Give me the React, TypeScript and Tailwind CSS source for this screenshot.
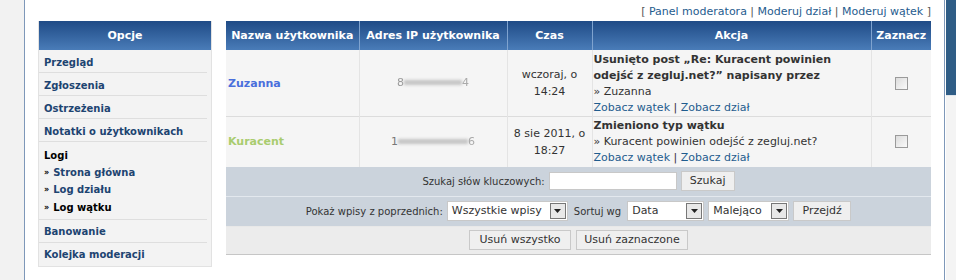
import React from "react";

const font = { fontFamily: '"DejaVu Sans", Verdana, sans-serif' };

function Select({ label, w }: { label: string; w: string }) {
  return (
    <div className={`flex items-center h-[20px] bg-white border border-[#c8c8c8] ${w}`}>
      <span className="flex-1 pl-[4px] text-[11px] text-[#333] whitespace-nowrap">{label}</span>
      <span className="w-[16px] h-[16px] mr-[1px] flex items-center justify-center bg-[#e8e8e8] border border-[#777]">
        <svg width="7" height="4" viewBox="0 0 7 4"><path d="M0 0h7L3.5 4z" fill="#222" /></svg>
      </span>
    </div>
  );
}

function Btn({ children, w }: { children: React.ReactNode; w?: string }) {
  return (
    <div className={`h-[20px] flex items-center justify-center bg-[#efefef] border border-[#c9c9c9] text-[11px] text-[#333] whitespace-nowrap ${w ?? ""}`}>
      {children}
    </div>
  );
}

function Check() {
  return <div className="w-[13px] h-[13px] border border-[#9a9a9a] bg-gradient-to-br from-[#dcdcdc] to-[#fafafa] mx-auto" />;
}

export default function App() {
  const side = "block px-[5px] text-[10px] font-bold text-[#1d4471]";
  const sub = "h-[17px] flex items-center px-[5px] text-[10px] font-bold";
  return (
    <div className="flex w-[956px] h-[280px] bg-white overflow-hidden" style={font}>
      <div className="w-[25px] bg-[#f2f2f2] border-r border-[#7e98b9]" />
      <div className="w-[919px] pl-[13px] pr-[13px]">
        <div className="h-[21px] pt-[3px] flex items-center justify-end text-[11px] text-[#555] whitespace-nowrap">
          [&nbsp;<span className="text-[#1f5c8e]">Panel moderatora</span>&nbsp;|&nbsp;<span className="text-[#1f5c8e]">Moderuj dział</span>&nbsp;|&nbsp;<span className="text-[#1f5c8e]">Moderuj wątek</span>&nbsp;]
        </div>
        <div className="flex items-start gap-[14px]">
          {/* sidebar */}
          <div className="w-[174px] bg-[#f3f3f3] border border-[#e2e2e2] border-t-0">
            <div className="h-[29px] pt-[2px] flex items-center justify-center bg-gradient-to-b from-[#1f4b86] to-[#4a7cb8] text-white font-bold text-[11px]">
              Opcje
            </div>
            <div className="pr-[4px]">
              <div className="h-[23px] pt-[2px] flex items-center border-b border-[#dedede]"><span className={side}>Przegląd</span></div>
              <div className="h-[23px] pt-[2px] flex items-center border-b border-[#dedede]"><span className={side}>Zgłoszenia</span></div>
              <div className="h-[23px] pt-[2px] flex items-center border-b border-[#dedede]"><span className={side}>Ostrzeżenia</span></div>
              <div className="h-[23px] pt-[2px] flex items-center border-b border-[#dedede]"><span className={side}>Notatki o użytkownikach</span></div>
              <div className="pt-[5px] pb-[2px] border-b border-[#dedede]">
                <div className={`${sub} h-[16px] text-black`}>Logi</div>
                <div className={`${sub} text-[#1d4471]`}><span className="text-[8px] mr-[4px] text-black">»</span>Strona główna</div>
                <div className={`${sub} text-[#1d4471]`}><span className="text-[8px] mr-[4px] text-black">»</span>Log działu</div>
                <div className={`${sub} h-[19px] text-black`}><span className="text-[8px] mr-[4px]">»</span>Log wątku</div>
              </div>
              <div className="h-[23px] flex items-center border-b border-[#dedede]"><span className={side}>Banowanie</span></div>
              <div className="h-[23px] flex items-center"><span className={side}>Kolejka moderacji</span></div>
            </div>
          </div>
          {/* table */}
          <div className="w-[705px] border-b border-[#c6c6c6]">
            <table className="w-full table-fixed border-collapse text-[11px] text-[#333]">
              <thead>
                <tr className="h-[29px] bg-gradient-to-b from-[#1f4b86] to-[#4a7cb8] text-white font-bold text-[11px] whitespace-nowrap">
                  <th className="w-[133px] pt-[2px] border-r border-[#7fa3cf] font-bold">Nazwa użytkownika</th>
                  <th className="w-[148px] pt-[2px] border-r border-[#7fa3cf] font-bold">Adres IP użytkownika</th>
                  <th className="w-[85px] pt-[2px] border-r border-[#7fa3cf] font-bold">Czas</th>
                  <th className="w-[279px] pt-[2px] border-r border-[#7fa3cf] font-bold">Akcja</th>
                  <th className="pt-[2px] font-bold">Zaznacz</th>
                </tr>
              </thead>
              <tbody>
                <tr className="h-[65px] bg-[#f5f5f5] border-b border-[#dcdcdc]">
                  <td className="pl-[2px] pt-[2px] border-r border-[#e4e4e4] font-bold text-[#4a6fdc]">Zuzanna</td>
                  <td className="border-r border-[#e4e4e4] text-center">
                    <span className="text-[#999] blur-[0.4px]">8</span><span className="inline-block align-middle w-[58px] h-[5px] bg-[#c4c4c4] blur-[1.5px]" /><span className="text-[#aaa] blur-[0.6px]">4</span>
                  </td>
                  <td className="border-r border-[#e4e4e4] text-center leading-[17px]">wczoraj, o<br />14:24</td>
                  <td className="border-r border-[#e4e4e4] px-[1px] leading-[16px] align-top pt-[2px]">
                    <div className="font-bold">Usunięto post „Re: Kuracent powinien odejść z zegluj.net?” napisany przez</div>
                    <div>» Zuzanna</div>
                    <div><span className="text-[#1f5c8e]">Zobacz wątek</span> | <span className="text-[#1f5c8e]">Zobacz dział</span></div>
                  </td>
                  <td><Check /></td>
                </tr>
                <tr className="h-[50px] bg-[#f5f5f5]">
                  <td className="pl-[2px] border-r border-[#e4e4e4] font-bold text-[#a9cc6e]">Kuracent</td>
                  <td className="border-r border-[#e4e4e4] text-center">
                    <span className="text-[#777]">1</span><span className="inline-block align-middle w-[70px] h-[5px] bg-[#c4c4c4] blur-[1.5px]" /><span className="text-[#aaa] blur-[0.6px]">6</span>
                  </td>
                  <td className="border-r border-[#e4e4e4] text-center leading-[17px] whitespace-nowrap">8 sie 2011, o<br />18:27</td>
                  <td className="border-r border-[#e4e4e4] px-[1px] leading-[16px]">
                    <div className="font-bold">Zmieniono typ wątku</div>
                    <div>» Kuracent powinien odejść z zegluj.net?</div>
                    <div><span className="text-[#1f5c8e]">Zobacz wątek</span> | <span className="text-[#1f5c8e]">Zobacz dział</span></div>
                  </td>
                  <td><Check /></td>
                </tr>
              </tbody>
            </table>
            <div className="h-[30px] bg-[#cbd3dc] border-b border-[#e3e8ee] flex items-center justify-center gap-[4px] text-[10px] text-[#333]">
              <span>Szukaj słów kluczowych:</span>
              <div className="w-[128px] h-[18px] bg-white border border-[#c8c8c8]" />
              <Btn w="w-[54px]">Szukaj</Btn>
            </div>
            <div className="h-[30px] bg-[#cbd3dc] border-b border-[#e8e8e8] flex items-center justify-center gap-[4px] text-[10px] text-[#333]">
              <span>Pokaż wpisy z poprzednich:</span>
              <Select label="Wszystkie wpisy" w="w-[121px]" />
              <span className="px-[2px]">Sortuj wg</span>
              <Select label="Data" w="w-[77px]" />
              <Select label="Malejąco" w="w-[81px]" />
              <Btn w="w-[58px]">Przejdź</Btn>
            </div>
            <div className="h-[27px] bg-[#ececec] flex items-center justify-center gap-[5px]">
              <Btn w="w-[102px]">Usuń wszystko</Btn>
              <Btn w="w-[112px]">Usuń zaznaczone</Btn>
            </div>
          </div>
        </div>
      </div>
      <div className="flex-1 border-l border-[#7e98b9]">
        <div className="h-[96px] ml-[1px] bg-[#2f5d86] border-b border-[#dfe5ec]" />
        <div className="ml-[1px] bg-[#f4f4f4] h-full" />
      </div>
    </div>
  );
}
